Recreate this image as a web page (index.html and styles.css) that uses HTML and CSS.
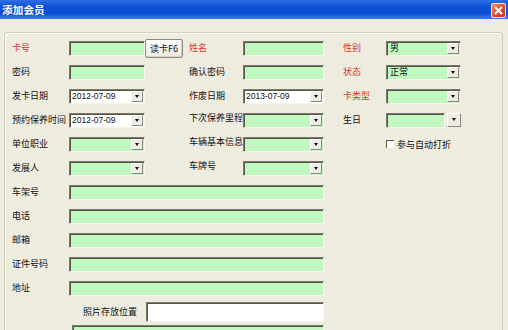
FILE: index.html
```html
<!DOCTYPE html>
<html lang="zh-CN">
<head>
    <meta charset="UTF-8">
    <title>添加会员</title>
    <link rel="stylesheet" href="styles.css">
</head>
<body>
    <div class="window">
        <!-- Title bar -->
        <div class="titlebar">
            <span class="title">添加会员</span>
            <span class="close">
                <svg width="9" height="9" viewBox="0 0 9 9"><path d="M1 1L8 8M8 1L1 8" stroke="#fff" stroke-width="2"/></svg>
            </span>
        </div>

        <div class="client">
            <div class="group">
                <div class="form">
                    <!-- Row 1 -->
                    <span class="label req">卡号</span>
                    <span class="field c2"></span>
                    <button class="btn">读卡F6</button>
                    <span class="label req c5">姓名</span>
                    <span class="field c6"></span>
                    <span class="label req c8">性别</span>
                    <span class="field combo c9">男<i class="drop"></i></span>

                    <!-- Row 2 -->
                    <span class="label">密码</span>
                    <span class="field c2"></span>
                    <span class="label c5">确认密码</span>
                    <span class="field c6"></span>
                    <span class="label req c8">状态</span>
                    <span class="field combo c9">正常<i class="drop"></i></span>

                    <!-- Row 3 -->
                    <span class="label">发卡日期</span>
                    <span class="field date c2">2012-07-09<i class="drop"></i></span>
                    <span class="label c5">作废日期</span>
                    <span class="field date c6">2013-07-09<i class="drop"></i></span>
                    <span class="label req c8">卡类型</span>
                    <span class="field combo c9"><i class="drop"></i></span>

                    <!-- Row 4 -->
                    <span class="label">预约保养时间</span>
                    <span class="field date c2">2012-07-09<i class="drop"></i></span>
                    <span class="label raised c5">下次保养里程</span>
                    <span class="field combo c6"><i class="drop"></i></span>
                    <span class="label c8">生日</span>
                    <span class="split c9"><span class="field"></span><i class="drop"></i></span>

                    <!-- Row 5 -->
                    <span class="label">单位职业</span>
                    <span class="field combo c2"><i class="drop"></i></span>
                    <span class="label raised c5">车辆基本信息</span>
                    <span class="field combo c6"><i class="drop"></i></span>
                    <label class="check c9"><span class="box"></span>参与自动打折</label>

                    <!-- Row 6 -->
                    <span class="label">发展人</span>
                    <span class="field combo c2"><i class="drop"></i></span>
                    <span class="label raised c5">车牌号</span>
                    <span class="field combo c6"><i class="drop"></i></span>

                    <!-- Wide rows -->
                    <span class="label">车架号</span>
                    <span class="field wide"></span>
                    <span class="label">电话</span>
                    <span class="field wide"></span>
                    <span class="label">邮箱</span>
                    <span class="field wide"></span>
                    <span class="label">证件号码</span>
                    <span class="field wide"></span>
                    <span class="label">地址</span>
                    <span class="field wide"></span>

                    <span class="label photo">照片存放位置</span>
                    <span class="field white path"></span>

                    <span class="field last"></span>
                </div>
            </div>
        </div>
    </div>
</body>
</html>
```

FILE: styles.css
```css
* {
    margin: 0;
    padding: 0;
    box-sizing: border-box;
}

body {
    background: #eeebdf;
    font-family: "Noto Sans CJK SC", "Liberation Sans", sans-serif;
    font-size: 9px;
    color: #111;
}

.window {
    width: 508px;
    height: 330px;
    overflow: hidden;
    background: #eeebdf;
}

/* Title bar */
.titlebar {
    height: 19px;
    background: linear-gradient(#2f6fe4, #0c50d6 35%, #0a4ed4 70%, #3a7cec);
    display: flex;
    align-items: center;
    justify-content: space-between;
    padding: 0 2px 0 2px;
}

.title {
    color: #fff;
    font-weight: bold;
    font-size: 10.5px;
    letter-spacing: 0.2px;
}

.close {
    width: 15px;
    height: 15px;
    margin-top: 1px;
    background: linear-gradient(135deg, #f08a6a, #d9472a 60%, #c23a22);
    border: 1px solid #f4e8e2;
    border-radius: 2px;
    display: flex;
    align-items: center;
    justify-content: center;
}

/* Group box */
.client {
    padding: 13px 5px 0 4px;
}

.group {
    border: 1px solid #d3d0c0;
    border-bottom: none;
    border-radius: 3px 3px 0 0;
    box-shadow: inset 1px 1px 0 #fbfaf5;
    height: 320px;
    padding: 3px 0 0 7px;
}

.form {
    display: grid;
    grid-template-columns: 57px 76px 38px 6px 54px 81px 19px 43px 75px;
    grid-auto-rows: 24px;
    align-items: center;
}

.label {
    grid-column: 1;
    white-space: nowrap;
    line-height: 12px;
}

.req {
    color: #d23a30;
}

.raised {
    margin-top: -5px;
}

.c2 { grid-column: 2; }
.c5 { grid-column: 5; }
.c6 { grid-column: 6; }
.c8 { grid-column: 8; }
.c9 { grid-column: 9; }

/* Inputs */
.field {
    height: 15px;
    background: #c0f8c0;
    border: 1px solid;
    border-color: #7b7b6c #f6f5ef #f6f5ef #7b7b6c;
    box-shadow: inset 1px 1px 0 #55554a;
    display: flex;
    align-items: center;
    padding-left: 3px;
    position: relative;
    line-height: 12px;
}

.wide {
    grid-column: 2 / 7;
}

.white {
    background: #fff;
}

.date {
    background: #fff;
    font-family: "Liberation Sans", sans-serif;
    font-size: 8.5px;
    padding-left: 2px;
}

.drop {
    position: absolute;
    right: 1px;
    top: 1px;
    width: 12px;
    height: 11px;
    background: #eeebe2;
    border: 1px solid;
    border-color: #fff #8a8a80 #8a8a80 #fff;
}

.drop::after {
    content: "";
    position: absolute;
    left: 3px;
    top: 3px;
    border-left: 2.5px solid transparent;
    border-right: 2.5px solid transparent;
    border-top: 3px solid #111;
}

.split {
    display: flex;
    align-items: center;
    gap: 2px;
}

.split .field {
    flex: 1;
}

.split .drop {
    position: relative;
    right: auto;
    top: auto;
    width: 14px;
    height: 14px;
}

.split .drop::after {
    left: 4px;
    top: 4px;
}

/* Button */
.btn {
    grid-column: 3;
    height: 19px;
    font-family: inherit;
    font-size: 9px;
    color: #111;
    background: linear-gradient(#fdfdfb, #eceae0);
    border: 1px solid #8c8c80;
    border-radius: 2px;
    box-shadow: inset -1px -1px 0 #d6d3c6;
}

/* Checkbox */
.check {
    display: flex;
    align-items: center;
    gap: 3px;
    white-space: nowrap;
}

.box {
    width: 8px;
    height: 8px;
    background: #fff;
    border-top: 1px solid #5a5a50;
    border-left: 1px solid #5a5a50;
}

/* Photo row */
.photo {
    grid-column: 2;
    padding-left: 14px;
}

.path {
    grid-column: 3 / 7;
    height: 20px;
    margin-left: 1px;
}

.last {
    grid-column: 2 / 7;
    align-self: start;
    margin-top: 1px;
    margin-left: 3px;
}
```
